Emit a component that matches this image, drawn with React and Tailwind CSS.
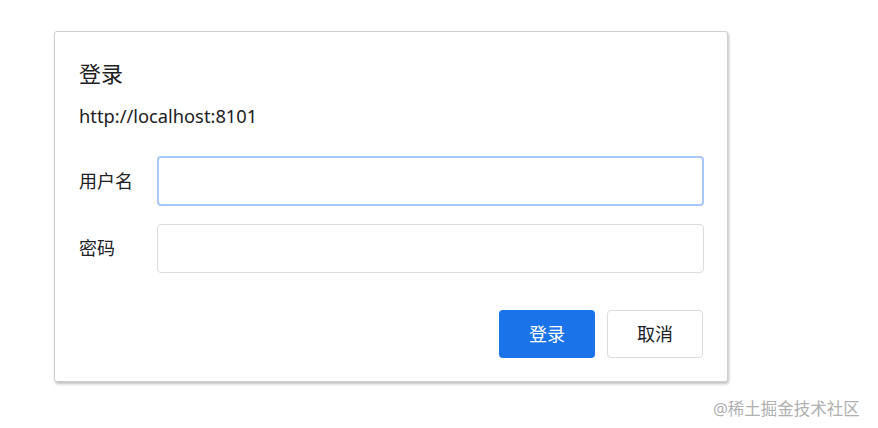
import React from 'react'

const font = { fontFamily: '"Noto Sans", "Noto Sans CJK SC", sans-serif' }

const Field = ({ label, focused }) => (
  <div className="flex items-center">
    <div className="w-[78px] text-[18px] text-[#202124]">{label}</div>
    <div
      className={
        focused
          ? 'w-[547px] h-[50px] rounded-[4px] border-2 border-[#a8c7fa] bg-white'
          : 'w-[547px] h-[49px] rounded-[4px] border border-[#dadce0] bg-white'
      }
    />
  </div>
)

export default function App() {
  return (
    <div className="relative w-[878px] h-[428px] bg-white" style={font}>
      <div className="pt-[31px] pl-[54px]">
        <div className="w-[674px] h-[351px] border border-[#cfcfcf] rounded-[3px] bg-white shadow-[1px_2px_3px_rgba(0,0,0,0.25)] pl-[24px] pr-[23px] pt-[26px]">
          <div className="text-[22px] leading-[30px] text-[#202124]">登录</div>
          <div className="mt-[16px] text-[18.3px] leading-[24px] text-[#202124]">
            http://localhost:8101
          </div>
          <div className="mt-[28px] flex flex-col gap-[18px]">
            <Field label="用户名" focused />
            <Field label="密码" />
          </div>
          <div className="mt-[37px] flex justify-end gap-[12px] pr-[1px]">
            <button className="w-[96px] h-[48px] rounded-[4px] bg-[#1a73e8] text-white text-[18px]">
              登录
            </button>
            <button className="w-[96px] h-[48px] rounded-[4px] border border-[#dadce0] bg-white text-[#202124] text-[18px]">
              取消
            </button>
          </div>
        </div>
      </div>
      <div className="absolute left-[713px] top-[399px] text-[16.5px] leading-[20px] text-[#b0b0b0]">
        @稀土掘金技术社区
      </div>
    </div>
  )
}
